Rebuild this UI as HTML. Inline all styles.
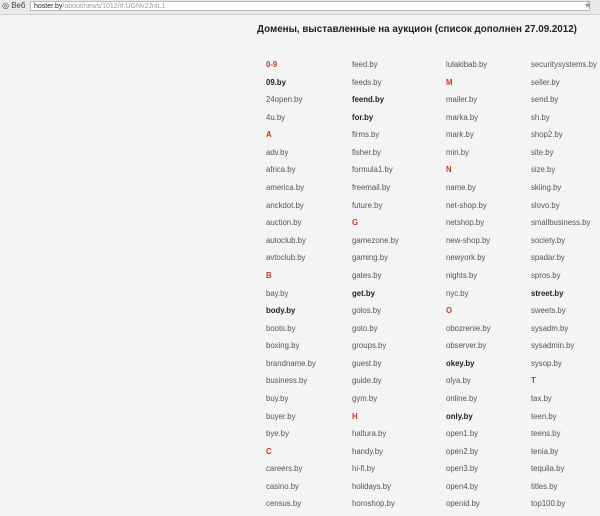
<!DOCTYPE html>
<html><head><meta charset="utf-8"><style>
html,body{margin:0;padding:0;width:600px;height:504px;overflow:hidden;background:#f4f4f4;font-family:"Liberation Sans",Arial,sans-serif;}
#bar{position:absolute;left:0;top:0;width:600px;height:14px;background:#e9e9e9;border-bottom:1px solid #d0d0d0;}
#bar .web{position:absolute;left:2px;top:1px;font-size:8px;color:#444;}
#bar .url{position:absolute;left:30px;top:1px;width:560px;height:10px;background:#fff;border:1px solid #b8b8b8;font-size:7px;line-height:10px;color:#999;padding-left:3px;box-sizing:border-box;}
#bar .url b{color:#222;font-weight:normal}
h1{position:absolute;left:257px;top:24px;margin:0;font-size:9.8px;font-weight:bold;color:#222;white-space:nowrap;}
.col{position:absolute;top:59px;font-size:7.8px;color:#555;}
.col div{height:17.58px;line-height:12px;white-space:nowrap;}
.col .l{color:#c0392b;font-weight:bold;}
.col .b{color:#222;font-weight:bold;}
</style></head><body>
<div id="bar"><span class="web">◎ Веб</span><div class="url"><b>hoster.by</b>/about/news/1012/#.UGNv2JntL1</div><span style="position:absolute;right:8px;top:0;font-size:9px;color:#999">★</span></div>
<h1>Домены, выставленные на аукцион (список дополнен 27.09.2012)</h1>
<div class="col" style="left:266px">
<div class="l">0-9</div><div class="b">09.by</div><div>24open.by</div><div>4u.by</div><div class="l">A</div><div>adv.by</div><div>africa.by</div><div>america.by</div><div>anckdot.by</div><div>auction.by</div><div>autoclub.by</div><div>avtoclub.by</div><div class="l">B</div><div>bay.by</div><div class="b">body.by</div><div>boots.by</div><div>boxing.by</div><div>brandname.by</div><div>business.by</div><div>buy.by</div><div>buyer.by</div><div>bye.by</div><div class="l">C</div><div>careers.by</div><div>casino.by</div><div>census.by</div>
</div>
<div class="col" style="left:352px">
<div>feed.by</div><div>feeds.by</div><div class="b">feend.by</div><div class="b">for.by</div><div>firms.by</div><div>fisher.by</div><div>formula1.by</div><div>freemail.by</div><div>future.by</div><div class="l">G</div><div>gamezone.by</div><div>gaming.by</div><div>gates.by</div><div class="b">get.by</div><div>golos.by</div><div>goto.by</div><div>groups.by</div><div>guest.by</div><div>guide.by</div><div>gym.by</div><div class="l">H</div><div>haltura.by</div><div>handy.by</div><div>hi-fi.by</div><div>holidays.by</div><div>horoshop.by</div>
</div>
<div class="col" style="left:446px">
<div>lulakibab.by</div><div class="l">M</div><div>mailer.by</div><div>marka.by</div><div>mark.by</div><div>min.by</div><div class="l">N</div><div>name.by</div><div>net-shop.by</div><div>netshop.by</div><div>new-shop.by</div><div>newyork.by</div><div>nights.by</div><div>nyc.by</div><div class="l">O</div><div>obozrenie.by</div><div>observer.by</div><div class="b">okey.by</div><div>olya.by</div><div>online.by</div><div class="b">only.by</div><div>open1.by</div><div>open2.by</div><div>open3.by</div><div>open4.by</div><div>openid.by</div>
</div>
<div class="col" style="left:531px">
<div>securitysystems.by</div><div>seller.by</div><div>send.by</div><div>sh.by</div><div>shop2.by</div><div>site.by</div><div>size.by</div><div>skiing.by</div><div>slovo.by</div><div>smallbusiness.by</div><div>society.by</div><div>spadar.by</div><div>spros.by</div><div class="b">street.by</div><div>sweets.by</div><div>sysadm.by</div><div>sysadmin.by</div><div>sysop.by</div><div class="l">T</div><div>tax.by</div><div>teen.by</div><div>teens.by</div><div>tenia.by</div><div>tequila.by</div><div>titles.by</div><div>top100.by</div>
</div>
</body></html>
